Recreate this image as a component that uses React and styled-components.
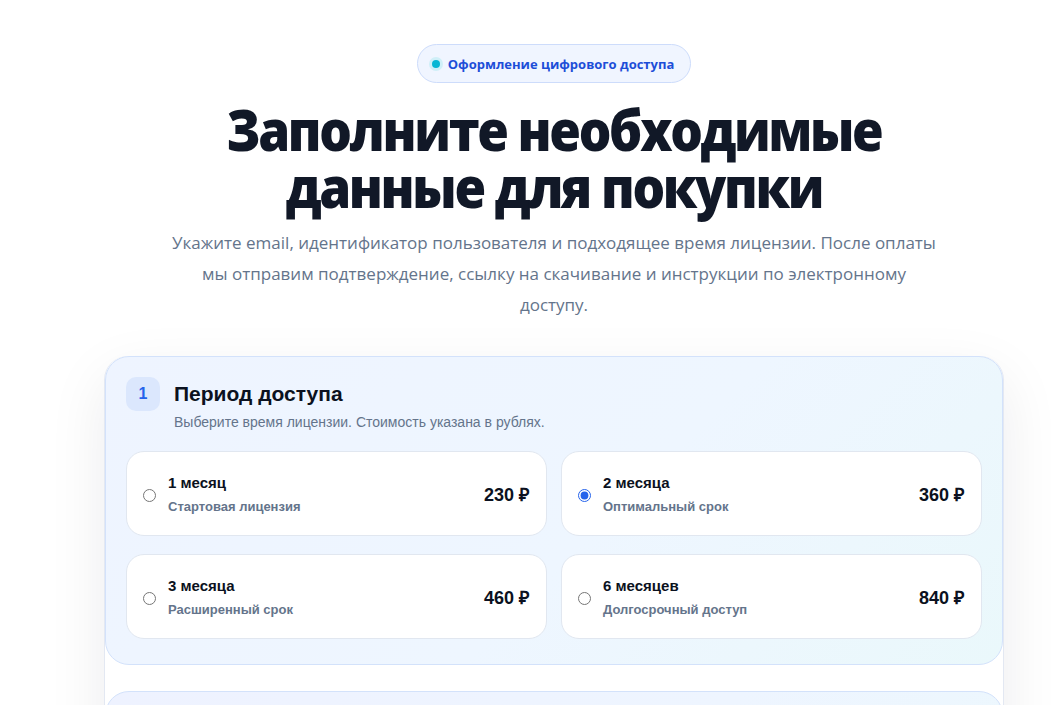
import React, { useState } from 'react';
import styled, { createGlobalStyle } from 'styled-components';

const Global = createGlobalStyle`
  html, body {
    margin: 0;
    padding: 0;
    background: #ffffff;
    overflow: hidden;
  }
  body {
    font-family: "Liberation Sans", Arial, sans-serif;
    color: #0f172a;
  }
`;

const Page = styled.div`
  width: 1108px;
  padding-top: 44px;
  display: flex;
  flex-direction: column;
  align-items: center;
`;

const Badge = styled.div`
  display: flex;
  align-items: center;
  gap: 8px;
  height: 37px;
  padding: 0 16px 0 14px;
  border: 1px solid #cddcfb;
  border-radius: 999px;
  background: #f0f5ff;
  font-family: "Open Sans", sans-serif;
  font-weight: 700;
  font-size: 13px;
  color: #1d4ed8;
`;

const Dot = styled.span`
  width: 8px;
  height: 8px;
  border-radius: 50%;
  background: #06b6d4;
  box-shadow: 0 0 0 3px #cfeff8;
`;

const Title = styled.h1`
  margin: 18px 0 0;
  font-family: "Open Sans", sans-serif;
  font-weight: 800;
  font-size: 57px;
  line-height: 57px;
  letter-spacing: -2.6px;
  text-align: center;
  color: #111827;
  transform: scaleX(0.9);
`;

const Lead = styled.p`
  margin: 12px 0 0;
  width: 770px;
  font-family: "Open Sans", sans-serif;
  font-size: 17px;
  line-height: 31px;
  color: #64748b;
  text-align: center;
`;

const Card = styled.div`
  margin-top: 36px;
  width: 898px;
  background: #ffffff;
  border: 1px solid #e3e8f2;
  border-top: none;
  border-radius: 24px 24px 0 0;
  box-shadow: 0 20px 60px rgba(15, 23, 42, 0.08);
  display: flex;
  flex-direction: column;
  gap: 26px;
`;

const Section = styled.section`
  border: 1px solid #d3e2fb;
  border-radius: 24px;
  background: ${p => p.$tone === 'violet'
    ? 'linear-gradient(135deg, #eef2ff 0%, #eef5ff 60%, #ecf8fd 100%)'
    : 'linear-gradient(135deg, #eef4ff 0%, #eef6ff 55%, #eaf8fb 100%)'};
  padding: 20px 20px 25px 20px;
  min-height: ${p => p.$tall ? '120px' : '0'};
`;

const Head = styled.div`
  display: grid;
  grid-template-columns: 34px 1fr;
  column-gap: 14px;
  align-items: center;
`;

const Num = styled.div`
  width: 34px;
  height: 34px;
  border-radius: 10px;
  background: #dbe7fd;
  color: #2563eb;
  font-weight: 700;
  font-size: 16px;
  display: flex;
  align-items: center;
  justify-content: center;
`;

const SectionTitle = styled.h2`
  margin: 0;
  font-size: 21px;
  font-weight: 700;
  color: #0b1120;
`;

const SectionHint = styled.p`
  grid-column: 2;
  margin: 3px 0 0;
  font-size: 14px;
  color: #64748b;
`;

const Options = styled.div`
  margin-top: 21px;
  display: grid;
  grid-template-columns: 1fr 1fr;
  gap: 18px 14px;
`;

const Option = styled.label`
  height: 85px;
  box-sizing: border-box;
  display: flex;
  align-items: center;
  gap: 12px;
  padding: 0 17px 0 16px;
  background: #ffffff;
  border: 1px solid #e1e7f0;
  border-radius: 18px;
  cursor: pointer;
`;

const Radio = styled.input`
  margin: 4px 0 0;
  width: 13px;
  height: 13px;
  accent-color: #2563eb;
`;

const OptionText = styled.div`
  flex: 1;
  display: flex;
  flex-direction: column;
  gap: 8px;
`;

const OptionName = styled.span`
  font-size: 15px;
  font-weight: 700;
  color: #0b1120;
`;

const OptionNote = styled.span`
  font-size: 13px;
  font-weight: 700;
  color: #64748b;
`;

const Price = styled.span`
  font-size: 18px;
  font-weight: 700;
  color: #0b1120;
`;

const plans = [
  { id: 1, name: '1 месяц', note: 'Стартовая лицензия', price: '230 ₽' },
  { id: 2, name: '2 месяца', note: 'Оптимальный срок', price: '360 ₽' },
  { id: 3, name: '3 месяца', note: 'Расширенный срок', price: '460 ₽' },
  { id: 6, name: '6 месяцев', note: 'Долгосрочный доступ', price: '840 ₽' },
];

export default function App() {
  const [plan, setPlan] = useState(2);

  return (
    <>
      <Global />
      <Page>
        <Badge><Dot />Оформление цифрового доступа</Badge>
        <Title>Заполните необходимые<br />данные для покупки</Title>
        <Lead>
          Укажите email, идентификатор пользователя и подходящее время лицензии. После оплаты
          мы отправим подтверждение, ссылку на скачивание и инструкции по электронному доступу.
        </Lead>
        <Card>
          <Section>
            <Head>
              <Num>1</Num>
              <SectionTitle>Период доступа</SectionTitle>
              <SectionHint>Выберите время лицензии. Стоимость указана в рублях.</SectionHint>
            </Head>
            <Options>
              {plans.map(p => (
                <Option key={p.id}>
                  <Radio
                    type="radio"
                    name="plan"
                    checked={plan === p.id}
                    onChange={() => setPlan(p.id)}
                  />
                  <OptionText>
                    <OptionName>{p.name}</OptionName>
                    <OptionNote>{p.note}</OptionNote>
                  </OptionText>
                  <Price>{p.price}</Price>
                </Option>
              ))}
            </Options>
          </Section>
          <Section $tone="violet" $tall />
        </Card>
      </Page>
    </>
  );
}
